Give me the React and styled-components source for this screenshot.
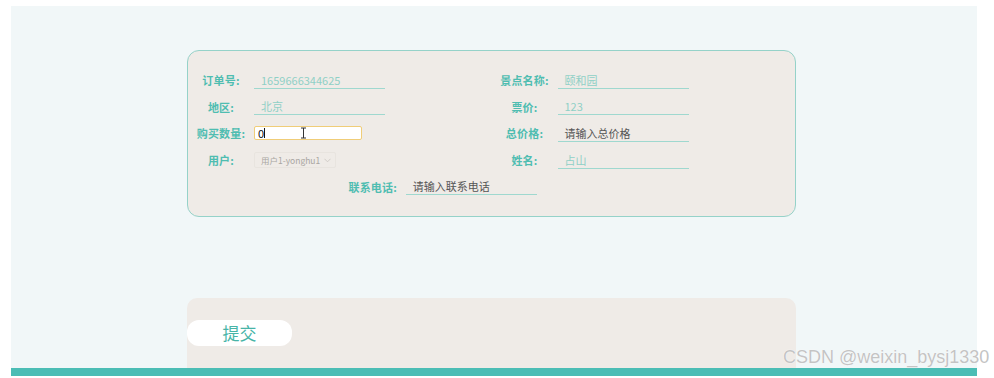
import React from 'react';
import styled, { createGlobalStyle } from 'styled-components';

const Global = createGlobalStyle`
  html, body {
    margin: 0;
    padding: 0;
    background: #ffffff;
    font-family: "Noto Sans CJK SC", "Noto Sans", sans-serif;
  }
`;

const Screen = styled.div`
  position: relative;
  width: 994px;
  height: 378px;
  overflow: hidden;
  background: #ffffff;
`;

const Page = styled.div`
  margin: 6px 0 0 11px;
  width: 966px;
  height: 362px;
  background: #f1f7f8;
  overflow: hidden;
  display: flex;
  flex-direction: column;
  padding-left: 176px;
  box-sizing: border-box;
  padding-top: 44px;
`;

const Bar = styled.div`
  margin-left: 11px;
  width: 966px;
  height: 8px;
  background: #4bbdb5;
`;

const FormCard = styled.div`
  flex: none;
  width: 609px;
  height: 167px;
  box-sizing: border-box;
  border: 1px solid #95d2c9;
  border-radius: 12px;
  background: #efebe7;
  padding-top: 16px;
  display: flex;
  flex-wrap: wrap;
  justify-content: center;
  align-content: flex-start;
`;

const Field = styled.div`
  width: 50%;
  height: 26.6px;
  display: flex;
  align-items: center;
`;

const Label = styled.div`
  width: 66px;
  flex: none;
  text-align: center;
  font-size: 11px;
  font-weight: 700;
  color: #4fbdb1;
  letter-spacing: 0.2px;
`;

const Line = styled.div`
  width: 131px;
  height: 16px;
  margin-top: 1px;
  box-sizing: border-box;
  border-bottom: 1px solid #9fd8cf;
  padding-left: 7px;
  font-size: 11px;
  line-height: 14px;
  color: ${p => (p.$filled ? '#555555' : '#8fd0c6')};
  white-space: nowrap;
`;

const FocusBox = styled.div`
  position: relative;
  width: 108px;
  height: 14px;
  box-sizing: border-box;
  border: 1px solid #f0cd78;
  border-radius: 2px;
  background: #ffffff;
  padding-left: 3px;
  font-size: 11px;
  line-height: 12px;
  color: #111111;
  display: flex;
  align-items: center;
`;

const Caret = styled.span`
  display: inline-block;
  width: 1px;
  height: 10px;
  background: #111;
`;

const Pointer = styled.svg`
  position: absolute;
  left: 45px;
  top: 0px;
`;

const Select = styled.div`
  width: 82px;
  height: 16px;
  box-sizing: border-box;
  border: 1px solid #e8e4df;
  border-radius: 2px;
  padding-left: 6px;
  display: flex;
  align-items: center;
  gap: 4px;
  font-size: 8.5px;
  color: #a9a6a2;
  white-space: nowrap;
`;

const Gap = styled.div`
  height: 81px;
  flex: none;
`;

const ActionCard = styled.div`
  width: 609px;
  height: 90px;
  flex: none;
  border-radius: 10px;
  background: #efebe7;
  padding-top: 22px;
  box-sizing: border-box;
`;

const Submit = styled.button`
  width: 105px;
  height: 26px;
  border: none;
  border-radius: 12px;
  background: #ffffff;
  color: #47b4a7;
  font-family: "Noto Sans CJK SC", sans-serif;
  font-size: 17px;
  line-height: 26px;
  padding: 0;
  cursor: pointer;
`;

const Watermark = styled.div`
  position: absolute;
  left: 783px;
  top: 347px;
  font-family: "Liberation Sans", Arial, sans-serif;
  font-size: 18px;
  color: #c4c4c4;
  text-shadow: 0 0 1px #ffffff, 0 0 1px #ffffff;
  white-space: nowrap;
`;

const Chevron = () => (
  <svg width="7" height="5" viewBox="0 0 7 5">
    <path d="M0.5 0.8 L3.5 3.8 L6.5 0.8" fill="none" stroke="#c9c5c0" strokeWidth="0.8" />
  </svg>
);

const fields = [
  { label: '订单号:', value: '1659666344625' },
  { label: '景点名称:', value: '颐和园' },
  { label: '地区:', value: '北京' },
  { label: '票价:', value: '123' },
  { label: '购买数量:', focus: true },
  { label: '总价格:', value: '请输入总价格', filled: true },
  { label: '用户:', select: '用户1-yonghu1' },
  { label: '姓名:', value: '占山' },
  { label: '联系电话:', value: '请输入联系电话', filled: true },
];

export default function App() {
  return (
    <Screen>
      <Global />
      <Page>
        <FormCard>
          {fields.map(f => (
            <Field key={f.label}>
              <Label>{f.label}</Label>
              {f.focus ? (
                <FocusBox>
                  0<Caret />
                  <Pointer width="7" height="12" viewBox="0 0 7 12">
                    <path d="M1 1 H6 M1 11 H6 M3.5 1 V11" stroke="#333" strokeWidth="1" fill="none" />
                  </Pointer>
                </FocusBox>
              ) : f.select ? (
                <Select>
                  {f.select}
                  <Chevron />
                </Select>
              ) : (
                <Line $filled={f.filled}>{f.value}</Line>
              )}
            </Field>
          ))}
        </FormCard>
        <Gap />
        <ActionCard>
          <Submit>提交</Submit>
        </ActionCard>
      </Page>
      <Bar />
      <Watermark>CSDN @weixin_bysj1330</Watermark>
    </Screen>
  );
}
